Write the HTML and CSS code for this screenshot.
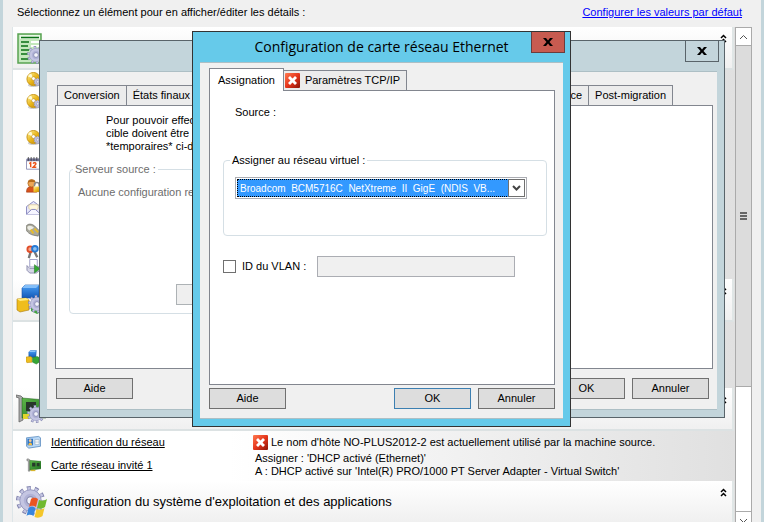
FILE: index.html
```html
<!DOCTYPE html>
<html lang="fr">
<head>
    <meta charset="UTF-8">
    <meta name="viewport" content="width=device-width, initial-scale=1.0">
    <title>Conversion</title>
    <link rel="stylesheet" href="styles.css">
</head>
<body>
    <!-- Shared icons -->
    <svg class="sprite" aria-hidden="true">
        <defs>
            <linearGradient id="gold" x1="0" y1="0" x2="1" y2="1">
                <stop offset="0" stop-color="#fff3a0"/>
                <stop offset=".5" stop-color="#eab71c"/>
                <stop offset="1" stop-color="#b77d08"/>
            </linearGradient>
            <linearGradient id="red" x1="0" y1="0" x2="1" y2="1">
                <stop offset="0" stop-color="#ff7a50"/>
                <stop offset=".5" stop-color="#e6361c"/>
                <stop offset="1" stop-color="#8c1408"/>
            </linearGradient>
            <linearGradient id="blue" x1="0" y1="0" x2="0" y2="1">
                <stop offset="0" stop-color="#4aa0f5"/>
                <stop offset="1" stop-color="#1258b8"/>
            </linearGradient>
            <linearGradient id="pcb" x1="0" y1="0" x2="1" y2="1">
                <stop offset="0" stop-color="#5fb84a"/>
                <stop offset="1" stop-color="#1d7020"/>
            </linearGradient>
            <symbol id="gear" viewBox="0 0 20 20">
                <circle cx="10" cy="10" r="8" fill="none" stroke="#8284ae" stroke-width="4" stroke-dasharray="2.51"/>
                <circle cx="10" cy="10" r="8" fill="none" stroke="#c4c5e2" stroke-width="2.6" stroke-dasharray="1.8 3.22" stroke-dashoffset="-.3"/>
                <circle cx="10" cy="10" r="7.4" fill="#c4c5e2" stroke="#9395bd" stroke-width=".6"/>
                <circle cx="10" cy="10" r="4.6" fill="#b0b2d6"/>
                <circle cx="10" cy="10" r="2.6" fill="#f4f5fb" stroke="#8083aa" stroke-width=".8"/>
            </symbol>
            <symbol id="disc" viewBox="0 0 16 16">
                <ellipse cx="8" cy="14" rx="6" ry="2" fill="#cfcfcf"/>
                <circle cx="8" cy="7.5" r="7" fill="url(#gold)" stroke="#c99412"/>
                <path d="M8 7.5L2 4.500A6.500 6.500 0 0 1 5.500 1.500z" fill="#fffbd6"/>
                <circle cx="8" cy="7" r="2" fill="#fff" stroke="#b9860f" stroke-width=".6"/>
                <use href="#gear" x="8" y="6" width="9" height="9"/>
            </symbol>
            <symbol id="cubes" viewBox="0 0 16 16">
                <path d="M3 2l2-1.500h6L10.500 8H3z" fill="url(#blue)" stroke="#1552a5" stroke-width=".5"/>
                <path d="M3 2l2-1.500h6L9.500 2z" fill="#8cc4fa"/>
                <path d="M0 7.500l5-.5 1.500 1v5L1 13.500 0 12.500z" fill="#edbd20" stroke="#b28410" stroke-width=".5"/>
                <path d="M7 8l5-1 2 1v5l-3 2-4-2z" fill="#36a535" stroke="#1b7520" stroke-width=".5"/>
            </symbol>
            <symbol id="card" viewBox="0 0 16 16">
                <path d="M1 1h2l1 1v12H2.500V3H1z" fill="#b5b5b5" stroke="#6e6e6e" stroke-width=".6"/>
                <path d="M4 2.500l12 1v8L4 13z" fill="url(#pcb)" stroke="#1f5a1c" stroke-width=".4"/>
                <path d="M6.500 5h3.500v4H6.500zM11.500 5.200h3v3.500h-3z" fill="#263a2a"/>
                <path d="M5 12.500h5v1.500H5z" fill="#d7b52e"/>
            </symbol>
            <symbol id="error" viewBox="0 0 15 15">
                <rect width="15" height="15" rx="1" fill="url(#red)"/>
                <path d="M3 5L5 3l2.500 2.500L10 3l2 2-2.500 2.500L12 10l-2 2-2.500-2.500L5 12l-2-2 2.500-2.500z" fill="#fff"/>
            </symbol>
            <symbol id="collapse" viewBox="0 0 7 9">
                <path d="M1 4l2.500-2.500L6 4M1 8l2.500-2.500L6 8" fill="none" stroke="#000" stroke-width="1.500"/>
            </symbol>
        </defs>
    </svg>

    <main class="window">
        <header class="topbar">
            <span>Sélectionnez un élément pour en afficher/éditer les détails :</span>
            <a href="#">Configurer les valeurs par défaut</a>
        </header>

        <div class="content">
            <div class="list">
                <section>
                    <div class="section-head">
                        <svg class="icon-big" viewBox="0 0 32 32">
                            <path d="M2 2h23v29H2z" fill="#c4e8bd" stroke="#58a252" stroke-width="1.500"/>
                            <path d="M4 3h20v4H4z" fill="#e8f7e5"/>
                            <path d="M5 5.500h18M5 10h8M5 14h7M5 18h8M5 22h7M5 27h7" stroke="#087015" stroke-width="1.500"/>
                            <path d="M15 10h9M15 14h9" stroke="#fff" stroke-width="2"/>
                            <use href="#gear" x="11" y="14" width="18" height="18"/>
                        </svg>
                        <h2></h2>
                        <svg class="collapse"><use href="#collapse"/></svg>
                    </div>
                    <ul class="items">
                        <li><svg class="icon"><use href="#disc"/></svg></li>
                        <li class="tall"><svg class="icon"><use href="#disc"/></svg></li>
                        <li class="mid"><svg class="icon"><use href="#disc"/></svg></li>
                        <li>
                            <svg class="icon" viewBox="0 0 16 16">
                                <path d="M.5 2.500h15V13H.5z" fill="#fff" stroke="#8f90b5"/>
                                <path d="M1 1.500h14v3H1z" fill="#77779a"/>
                                <path d="M2.500 0v4M5.500 0v4M8.500 0v4M11.500 0v4" stroke="#333" stroke-width=".8"/>
                                <path d="M3.500 7L5 6v5M7.500 7c1-1.500 3.500-1 3 .7L7.500 11H11" fill="none" stroke="#ec5318" stroke-width="1.500"/>
                            </svg>
                        </li>
                        <li>
                            <svg class="icon" viewBox="0 0 16 16">
                                <path d="M.5 14c0-4 1.500-6 5-6s6 2 6 6z" fill="#d8531c" stroke="#9c3611" stroke-width=".6"/>
                                <circle cx="6" cy="4.500" r="4" fill="#eda656" stroke="#a56019" stroke-width=".7"/>
                                <path d="M2 4C2 0 9 0 10 3 7 4 4 2 2 4z" fill="#b66b1c"/>
                                <path d="M9 8V6c0-3 5-3 5 0v2" fill="none" stroke="#888" stroke-width="1.500"/>
                                <path d="M8 8h8v6H8z" fill="url(#gold)"/>
                            </svg>
                        </li>
                        <li>
                            <svg class="icon" viewBox="0 0 16 16">
                                <path d="M.5 6L8 .5 15.500 6v8H.5z" fill="#e6e6fa" stroke="#8585bd"/>
                                <path d="M3 4h10v4l-3 2H6L3 8z" fill="#fff8dc" stroke="#d3bb82" stroke-width=".6"/>
                                <path d="M.5 14L6 9h4l5.500 5" fill="#f5f5ff" stroke="#8585bd"/>
                            </svg>
                        </li>
                        <li>
                            <svg class="icon" viewBox="0 0 16 16">
                                <path d="M0 4c1-3 5-4 9-1l5 5-1 6-5-1C3 12-1 8 0 4z" fill="#aaa99c" stroke="#686860" stroke-width=".7"/>
                                <path d="M1.500 4c2-2 5-1 7 1L4 8C2 7 1 5.500 1.500 4z" fill="#ecece4"/>
                                <path d="M5 7l3 4M9 6l4 4" stroke="#e9bd28" stroke-width="2"/>
                            </svg>
                        </li>
                        <li class="short">
                            <svg class="icon" viewBox="0 0 16 16">
                                <path d="M5 7L3 14M9 7l3 6" stroke="#777" stroke-width="2.500"/>
                                <circle cx="4.500" cy="4.500" r="3" fill="#f6a58c" stroke="#e04d28" stroke-width="2"/>
                                <circle cx="9.500" cy="4" r="3" fill="#8fc0f0" stroke="#257ad5" stroke-width="2"/>
                            </svg>
                        </li>
                        <li class="short">
                            <svg class="icon" viewBox="0 0 16 16">
                                <path d="M4 .5h8v8H4z" fill="#fff" stroke="#9c9cc4"/>
                                <path d="M1 7l3 3h7l4-3v5l-4 3H4l-3-3z" fill="#d5d5e6" stroke="#7979a0" stroke-width=".8"/>
                                <path d="M9 6l6 4.500L9 15z" fill="#36a832" stroke="#17701a" stroke-width=".5"/>
                            </svg>
                        </li>
                    </ul>
                </section>

                <section>
                    <div class="section-head">
                        <svg class="icon-big" viewBox="0 0 32 32">
                            <path d="M6 4l3-3h14v13H6z" fill="url(#blue)" stroke="#1552a5" stroke-width=".6"/>
                            <path d="M6 4l3-3h14l-3 3z" fill="#83bef8"/>
                            <path d="M15 17l12-2v12l-6 3-6-3z" fill="#43a63f"/>
                            <path d="M1 15l9-1 3 2v10l-9 2-3-2z" fill="#efbd1d" stroke="#a9790d" stroke-width=".6"/>
                            <path d="M1 15l9-1 3 2-9 1z" fill="#ffeb80"/>
                            <use href="#gear" x="12" y="11" width="18" height="18"/>
                        </svg>
                        <h2></h2>
                        <svg class="collapse"><use href="#collapse"/></svg>
                    </div>
                    <ul class="items items-single">
                        <li><svg class="icon"><use href="#cubes"/></svg></li>
                    </ul>
                </section>

                <section>
                    <div class="section-head">
                        <svg class="icon-big" viewBox="0 0 32 32">
                            <path d="M0 2l5 1 2 2v22l-4 2V5L0 4z" fill="#aaa" stroke="#666" stroke-width=".8"/>
                            <path d="M6 5l24 2v18L6 25z" fill="url(#pcb)" stroke="#1d5a1b" stroke-width=".5"/>
                            <path d="M10 9h10v9H10z" fill="#28372b"/>
                            <path d="M7 21h6v5H7z" fill="#e2d42c"/>
                            <use href="#gear" x="11" y="12" width="18" height="18"/>
                        </svg>
                        <h2>Configuration du réseau</h2>
                        <svg class="collapse"><use href="#collapse"/></svg>
                    </div>
                    <div class="network">
                        <svg class="icon" viewBox="0 0 16 16">
                            <path d="M.5 3l13-1.500 2 1.500v9L3 14 .5 12z" fill="#b9d8f6" stroke="#5285bb" stroke-width=".8"/>
                            <path d="M1.500 4h6v7h-6z" fill="#2f75c6"/>
                            <circle cx="4.500" cy="6" r="1.500" fill="#f4c895"/>
                            <path d="M2.500 11c0-4 4-4 4 0z" fill="#f5bd43"/>
                            <path d="M9.500 5h4.500v5H9.500zM9.500 7.500H14" fill="#fff" stroke="#8ba6bd" stroke-width=".6"/>
                        </svg>
                        <a href="#">Identification du réseau</a>
                        <p class="error"><svg class="icon-error"><use href="#error"/></svg>Le nom d'hôte NO-PLUS2012-2 est actuellement utilisé par la machine source.</p>
                        <svg class="icon"><use href="#card"/></svg>
                        <a href="#">Carte réseau invité 1</a>
                        <p class="details">Assigner : 'DHCP activé (Ethernet)'<br>A : DHCP activé sur 'Intel(R) PRO/1000 PT Server Adapter - Virtual Switch'</p>
                    </div>
                </section>

                <section>
                    <div class="section-head">
                        <svg class="icon-big" viewBox="0 0 32 32">
                            <use href="#gear" x="0" y="0" width="29" height="29"/>
                            <path d="M15 13c3-2 5-1 7 0l-2 8c-2-1-4-2-7 0z" fill="#ea5522"/>
                            <path d="M23 14c3 1 5 1 8-1l-2 8c-3 2-5 2-8 1z" fill="#70b92f"/>
                            <path d="M12.500 22c3-2 5-1 7 0l-2 8c-2-1-4-2-7 0z" fill="#3885dc"/>
                            <path d="M20.500 23c3 1 5 1 8-1l-2 8c-3 2-5 2-8 1z" fill="#f4c62a"/>
                        </svg>
                        <h2>Configuration du système d'exploitation et des applications</h2>
                        <svg class="collapse"><use href="#collapse"/></svg>
                    </div>
                </section>
            </div>

            <div class="scrollbar">
                <button class="scroll-arrow" aria-label="Haut"><svg viewBox="0 0 9 6"><path d="M1 5l3.500-3.500L8 5"/></svg></button>
                <div class="scroll-thumb"><i></i><i></i><i></i></div>
                <div class="scroll-track"></div>
                <button class="scroll-arrow" aria-label="Bas"><svg viewBox="0 0 9 6"><path d="M1 1l3.500 3.500L8 1"/></svg></button>
            </div>
        </div>
    </main>

    <!-- Post-migration dialog, behind -->
    <div class="dialog dialog-back">
        <div class="titlebar">
            <button class="close" aria-label="Fermer"><svg viewBox="0 0 10 8"><path d="M0 0h3l2 2.500L7 0h3L6.500 4 10 8H7L5 5.500 3 8H0l3.500-4z"/></svg></button>
        </div>
        <div class="dialog-body">
            <div class="tabs">
                <button class="tab">Conversion</button>
                <button class="tab">États finaux</button>
                <button class="tab tab-wide">Licence</button>
                <button class="tab">Post-migration</button>
            </div>
            <div class="pane">
                <p class="note">Pour pouvoir effectuer<br>cible doivent être<br>*temporaires* ci-dessous</p>
                <fieldset class="group source" disabled>
                    <legend>Serveur source :</legend>
                    <p>Aucune configuration requise</p>
                    <button class="btn" aria-label="Configurer"></button>
                </fieldset>
            </div>
            <div class="buttons">
                <button class="btn first">Aide</button>
                <button class="btn">OK</button>
                <button class="btn">Annuler</button>
            </div>
        </div>
    </div>

    <!-- Ethernet card dialog -->
    <div class="dialog dialog-front">
        <div class="titlebar">
            <h1>Configuration de carte réseau Ethernet</h1>
            <button class="close" aria-label="Fermer"><svg viewBox="0 0 10 8"><path d="M0 0h3l2 2.500L7 0h3L6.500 4 10 8H7L5 5.500 3 8H0l3.500-4z"/></svg></button>
        </div>
        <div class="dialog-body">
            <div class="tabs">
                <button class="tab active">Assignation</button>
                <button class="tab"><svg class="icon-error"><use href="#error"/></svg>Paramètres TCP/IP</button>
            </div>
            <div class="pane">
                <p class="source-label">Source :</p>
                <fieldset class="group">
                    <legend><label for="network">Assigner au réseau virtuel :</label></legend>
                    <div class="combo">
                        <select id="network">
                            <option>Broadcom&nbsp; BCM5716C&nbsp; NetXtreme&nbsp; II&nbsp; GigE&nbsp; (NDIS&nbsp; VB...</option>
                        </select>
                        <span class="combo-arrow"><svg viewBox="0 0 9 7"><path d="M1 1l3.500 3.500L8 1"/></svg></span>
                    </div>
                </fieldset>
                <div class="vlan">
                    <input type="checkbox" id="vlan">
                    <label for="vlan">ID du VLAN :</label>
                    <input type="text" aria-label="ID du VLAN" disabled>
                </div>
            </div>
            <div class="buttons">
                <button class="btn first">Aide</button>
                <button class="btn default">OK</button>
                <button class="btn">Annuler</button>
            </div>
        </div>
    </div>
</body>
</html>
```
FILE: styles.css
```css
* {
    box-sizing: border-box;
}

html, body {
    height: 100%;
    margin: 0;
    overflow: hidden;
}

body {
    position: relative;
    background: #f0f0f0;
    color: #000;
    font-family: "Liberation Sans", Arial, sans-serif;
    font-size: 11px;
    line-height: 13px;
}

h1, h2, p, ul {
    margin: 0;
    padding: 0;
    font-weight: normal;
}

button, input, select {
    font: inherit;
    color: inherit;
    margin: 0;
    padding: 0;
    border-radius: 0;
}

svg {
    display: block;
    flex: none;
}

.sprite {
    position: absolute;
    width: 0;
    height: 0;
}

/* Main window */
.window {
    border-left: 3px solid #c3d5db;
    border-right: 3px solid #c3d5db;
}

.topbar {
    display: flex;
    justify-content: space-between;
    height: 27px;
    padding: 6px 19px 0 14px;
}

.topbar a {
    color: #00f;
}

.content {
    display: flex;
    padding: 0 9px;
}

.list {
    flex: 1;
    padding-bottom: 6px;
    border-left: 1px solid #dde5e8;
    background: linear-gradient(to right, #fff 30%, #e0e0e0);
}

.section-head {
    display: flex;
    align-items: center;
    height: 43px;
    margin-right: 1px;
    padding: 0 5px 0 3px;
    border-right: 2px solid #e0e6e6;
    border-bottom: 2px solid #dce2e3;
    background: linear-gradient(#fff, #f0f0f0);
}

.section-head h2 {
    flex: 1;
    padding-left: 6px;
    font-size: 13px;
    line-height: 16px;
}

.icon-big {
    width: 32px;
    height: 32px;
}

.icon {
    width: 15px;
    height: 15px;
}

.icon-error {
    width: 15px;
    height: 15px;
}

.collapse {
    width: 7px;
    height: 9px;
    margin-bottom: 18px;
}

.items {
    list-style: none;
    padding: 2px 0 6px 13px;
}

.items li {
    height: 22px;
}

.items .tall {
    height: 36px;
}

.items .mid {
    height: 27px;
}

.items .short {
    height: 14px;
}

.items-single {
    padding-top: 28px;
    padding-bottom: 16px;
}

.network {
    display: grid;
    grid-template-columns: 15px 192px 1fr;
    grid-template-rows: 20px 26px;
    column-gap: 10px;
    align-items: center;
    padding: 1px 0 3px 13px;
}

.network a {
    color: #000;
}

.network .error {
    display: flex;
    align-items: center;
    gap: 3px;
}

.network .details {
    padding-left: 2px;
}

/* Scroll bar */
.scrollbar {
    display: flex;
    flex-direction: column;
    width: 17px;
    border: 1px solid #aaa;
    background: #fff;
}

.scroll-arrow {
    display: flex;
    align-items: center;
    justify-content: center;
    height: 17px;
    border: 0;
    background: #fff;
}

.scroll-arrow svg {
    width: 9px;
    height: 6px;
    fill: none;
    stroke: #555;
}

.scroll-thumb {
    flex: 11;
    display: flex;
    flex-direction: column;
    align-items: center;
    justify-content: center;
    gap: 1px;
    border-top: 1px solid #aaa;
    border-bottom: 1px solid #aaa;
    background: #dcdcdc;
}

.scroll-thumb i {
    width: 7px;
    height: 2px;
    background: #666;
}

.scroll-track {
    flex: 4;
    border-bottom: 1px solid #aaa;
}

/* Dialogs */
.dialog {
    position: absolute;
    display: flex;
    flex-direction: column;
    border: 1px solid #333;
    padding: 0 7px 7px;
}

.dialog-back {
    top: 40px;
    left: 39px;
    right: 39px;
    border-color: #59646a;
    background: #c3d5db;
}

.dialog-front {
    top: 31px;
    left: 192px;
    right: 193px;
    background: #66caea;
}

.titlebar {
    display: flex;
    align-items: flex-start;
    justify-content: flex-end;
    height: 30px;
}

.titlebar h1 {
    flex: 1;
    padding-left: 32px;
    font-family: "Open Sans", "Noto Sans", sans-serif;
    font-size: 14px;
    line-height: 30px;
    text-align: center;
    white-space: nowrap;
}

.close {
    display: flex;
    align-items: center;
    justify-content: center;
    width: 34px;
    height: 21px;
    margin-right: -2px;
    border: 1px solid #59646a;
    border-top: 0;
    background: #c3d5db;
}

.dialog-front .close {
    border-color: #6b3c3c;
    background: #c75b50;
}

.close svg {
    width: 10px;
    height: 8px;
}

.dialog-body {
    padding: 13px 4px 10px 8px;
    border: 1px solid #adbfc5;
    border-width: 1px 0;
    background: #f0f0f0;
}

.dialog-front .dialog-body {
    padding: 5px 8px 9px 9px;
}

.tabs {
    display: flex;
    align-items: flex-end;
}

.dialog-back .tabs {
    padding: 0 40px 0 2px;
}

.tab {
    display: flex;
    align-items: center;
    justify-content: center;
    gap: 5px;
    height: 20px;
    padding: 0 6px;
    border: 1px solid #82868f;
    border-bottom: 0;
    border-left-width: 0;
    background: #ececec;
    white-space: nowrap;
}

.tab:first-child {
    border-left-width: 1px;
}

.tab-wide {
    flex: 1;
    justify-content: flex-end;
}

.tab.active {
    position: relative;
    height: 23px;
    margin-bottom: -1px;
    padding: 0 8px;
    background: #fff;
}

.tab .icon-error {
    margin-left: -5px;
}

.pane {
    border: 1px solid #82868f;
    background: #fff;
}

.dialog-back .pane {
    height: 264px;
    padding: 8px 160px 0 13px;
}

.dialog-front .pane {
    height: 295px;
    padding: 15px 7px 0 13px;
}

.note {
    padding-left: 37px;
}

.group {
    min-width: 0;
    margin: 0;
    padding: 0 11px;
    border: 1px solid #d5dfe5;
    border-radius: 4px;
}

.group legend {
    margin-left: -5px;
    padding: 0 2px;
}

.source {
    height: 151px;
    margin-top: 10px;
    padding: 0 8px;
    color: #6d6d6d;
}

.source p {
    padding-top: 10px;
}

.source .btn {
    margin: 85px 0 0 98px;
    border-color: #adb2b5;
    background: #efefef;
}

.source-label {
    padding-left: 12px;
    margin-bottom: 35px;
}

.dialog-front .group {
    height: 82px;
}

.combo {
    position: relative;
    width: 292px;
    max-width: 100%;
    height: 22px;
    margin-top: 10px;
    padding: 1px;
    border: 1px solid #abadb3;
    background: #fff;
}

.combo select {
    appearance: none;
    display: block;
    width: 100%;
    height: 18px;
    padding: 0 18px 0 2px;
    border: 1px dotted #000;
    background: #3399ff;
    color: #fff;
    font-size: 10px;
}

.combo-arrow {
    position: absolute;
    top: 1px;
    right: 1px;
    display: flex;
    align-items: center;
    justify-content: center;
    width: 17px;
    height: 18px;
    border: 1px solid #707070;
    background: #fff;
    pointer-events: none;
}

.combo-arrow svg {
    width: 9px;
    height: 7px;
    fill: none;
    stroke: #444;
    stroke-width: 2;
}

.vlan {
    display: flex;
    align-items: center;
    margin-top: 20px;
}

.vlan input[type="checkbox"] {
    appearance: none;
    width: 13px;
    height: 13px;
    margin-right: 6px;
    border: 1px solid #707070;
    background: #fff;
}

.vlan label {
    width: 75px;
}

.vlan input[type="text"] {
    width: 198px;
    height: 21px;
    border: 1px solid #abadb3;
    background: #f0f0f0;
}

.buttons {
    display: flex;
    gap: 7px;
    padding-top: 3px;
}

.dialog-back .buttons {
    padding: 9px 4px 0 1px;
}

.btn {
    width: 77px;
    height: 21px;
    border: 1px solid #707070;
    background: #ddd;
}

.btn.default {
    border-color: #3c7fb1;
}

.btn.first {
    margin-right: auto;
}
```
